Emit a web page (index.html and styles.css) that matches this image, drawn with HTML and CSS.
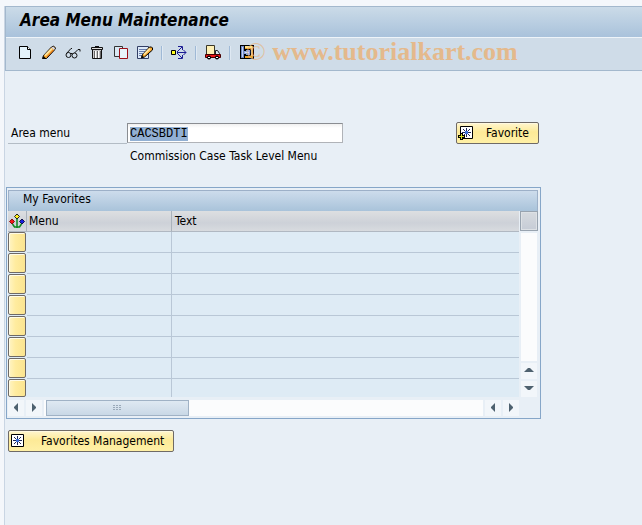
FILE: index.html
```html
<!DOCTYPE html>
<html lang="en">
<head>
  <meta charset="UTF-8">
  <meta name="viewport" content="width=device-width, initial-scale=1.0">
  <title>Area Menu Maintenance</title>
  <link rel="stylesheet" href="styles.css">
  <script>
    window.onload = () => {
      // focus the area menu field with its value selected
      const areaMenu = document.querySelector('#area-menu')
      areaMenu.focus()
      areaMenu.select()
    }
  </script>
</head>
<body>
  <div class="window">
    <header class="header">
      <h1 class="title">Area Menu Maintenance</h1>
      <nav class="toolbar" aria-label="Toolbar">
        <button type="button" class="tool" aria-label="Create">
          <svg viewBox="0 0 16 16"><path d="M2.500 1.500h8l3 3v9h-11z" fill="#e4f3fb" stroke="#000"/><path d="M10.500 1.500v3h3" fill="#fff" stroke="#000"/></svg>
        </button>
        <button type="button" class="tool" aria-label="Change">
          <svg viewBox="0 0 16 16"><path d="M1.500 13.500l1-3 8-8.500 2-1 2 2-1 2-8 8.500z" fill="#f7a62b" stroke="#000"/><path d="M4 10.500l7-7" stroke="#ffe29a" stroke-width="2"/><path d="M6 12l6.500-7" stroke="#d96b18"/><path d="M10.500 2.500l1.500-1 2 2-1 1.500z" fill="#cfd5ef"/><path d="M1.500 14l1-3 2 2z"/></svg>
        </button>
        <button type="button" class="tool" aria-label="Display">
          <svg viewBox="0 0 16 16"><g fill="none" stroke="#111"><path d="M1.500 8.500L6 3.500h1M9.500 8L13 4.500h2v2"/><circle cx="3.500" cy="10" r="2.500"/><circle cx="9.500" cy="10.500" r="2.500"/><path d="M5.500 8.500h2"/></g></svg>
        </button>
        <button type="button" class="tool" aria-label="Delete">
          <svg viewBox="0 0 16 16"><path d="M3.500 4.500h9v9h-9z" fill="#c9c9cb" stroke="#111"/><path d="M2.500 2.500h11v2h-11z" fill="#ddd" stroke="#111"/><path d="M6 1.500h4" stroke="#111"/><path d="M5.500 6v7M8.500 6v7M11.500 6v7" stroke="#666"/><path d="M6.500 6v7M9.500 6v7" stroke="#fff"/></svg>
        </button>
        <button type="button" class="tool" aria-label="Copy">
          <svg viewBox="0 0 16 16"><path d="M1.500 1.500h8v10h-8z" fill="#d9e9f4" stroke="#333"/><path d="M6.500 3.500h8v10h-8z" fill="#e8f4fb" stroke="#9c1019"/></svg>
        </button>
        <button type="button" class="tool" aria-label="Change header">
          <svg viewBox="0 0 16 16"><path d="M.5 1.500h11v12H.5z" fill="#dce9f8" stroke="#333f66"/><path d="M2 4.500h8M2 6.500h7M2 8.500h5M2 10.500h4" stroke="#6b7fae"/><path d="M4.500 12.500l1-3 7-7.500h2l1 1v2l-8 7z" fill="#f7a62b" stroke="#000"/><path d="M7 9.500l6-6" stroke="#ffe29a" stroke-width="2"/><path d="M4 13.500l1-3 2 2z"/></svg>
        </button>
        <span class="separator"></span>
        <button type="button" class="tool" aria-label="Where used">
          <svg viewBox="0 0 16 16"><path d="M6 7.500h9M6 7l5-5M6 8l5 5M7 1.500h4.500V5M7 13.500h4.500V10M12.500 5L15 7.500 12.500 10" fill="none" stroke="#1c1c94"/><path d="M.5 5.500h4v4h-4z" fill="#ffff20" stroke="#000"/></svg>
        </button>
        <span class="separator"></span>
        <button type="button" class="tool" aria-label="Transport">
          <svg viewBox="0 0 16 16"><path d="M1.500.5h8v9h-8z" fill="#fff0b4" stroke="#3a3728"/><path d="M10.500 5.500h2l2 3v2h-4z" fill="#dcecf5" stroke="#222"/><path d="M.5 9.500h15v3H.5z" fill="#ee1616" stroke="#400"/><circle cx="4" cy="12.500" r="2"/><circle cx="12" cy="12.500" r="2"/><path d="M3 12h2v1H3zM11 12h2v1h-2z" fill="#fff"/></svg>
        </button>
        <span class="separator"></span>
        <button type="button" class="tool" aria-label="Enhance">
          <svg viewBox="0 0 16 16"><path d="M1 0h14v14H1z"/><path d="M6 1h8v12H6v-2h5l1-1V5l-1-1H6z" fill="#e9a02c"/><path d="M6 1h7v2H6z" fill="#ffe28a"/><path d="M12 3h1v8h-1z" fill="#f8c860"/><path d="M2 1h3v12H2z" fill="#6f88c8"/><path d="M3 2h1v10H3z" fill="#c3d2f4"/><path d="M5 6h2V5h4v5H7V9H5z" fill="#8fa3dc"/><path d="M6 7h4v1H6z" fill="#dce5fb"/></svg>
        </button>
      </nav>
      <div class="watermark"><span class="copyright">©</span> www.tutorialkart.com</div>
    </header>

    <main class="content">
      <div class="form">
        <div class="field">
          <label for="area-menu">Area menu</label>
          <input type="text" id="area-menu" value="CACSBDTI">
          <output class="description" for="area-menu">Commission Case Task Level Menu</output>
        </div>
        <button type="button" class="button favorite">
          <svg viewBox="0 0 16 16"><path d="M2.500 1.500h12v12h-12z" fill="#fff" stroke="#000"/><path d="M8.500 3v9M4 7.500h9M5 4l7 7M12 4l-7 7" stroke="#1e2858"/><path d="M7 6h3v3H7z" fill="#3b6ed8"/><path d="M2 8h3v2h2v3H5v2H2v-2H0v-3h2z"/><path d="M3 9h1v2h2v1H4v2H3v-2H1v-1h2z" fill="#d9e021"/></svg>
          Favorite
        </button>
      </div>

      <section class="favorites" aria-labelledby="favorites-title">
        <h2 class="favorites-title" id="favorites-title">My Favorites</h2>
        <div class="grid">
          <div class="table">
            <table>
              <colgroup><col class="col-select"><col class="col-menu"><col></colgroup>
              <thead>
                <tr>
                  <th aria-label="Configuration"><svg viewBox="0 0 16 16"><path d="M8 6v9M3.500 11l2 3h5l2-3" fill="none" stroke="#0a8a1e" stroke-width="1.500"/><path d="M8 1L10.500 3.500 8 6 5.500 3.500z" fill="#fff020" stroke="#222"/><path d="M3 6L5.500 8.500 3 11 .5 8.500z" fill="#f01818" stroke="#811"/><path d="M13 6l2.500 2.500L13 11l-2.500-2.500z" fill="#1820e0" stroke="#114"/></svg></th>
                  <th>Menu</th>
                  <th>Text</th>
                </tr>
              </thead>
              <tbody>
                <tr><td><button type="button" class="select" aria-label="Row 1"></button></td><td></td><td></td></tr>
                <tr><td><button type="button" class="select" aria-label="Row 2"></button></td><td></td><td></td></tr>
                <tr><td><button type="button" class="select" aria-label="Row 3"></button></td><td></td><td></td></tr>
                <tr><td><button type="button" class="select" aria-label="Row 4"></button></td><td></td><td></td></tr>
                <tr><td><button type="button" class="select" aria-label="Row 5"></button></td><td></td><td></td></tr>
                <tr><td><button type="button" class="select" aria-label="Row 6"></button></td><td></td><td></td></tr>
                <tr><td><button type="button" class="select" aria-label="Row 7"></button></td><td></td><td></td></tr>
                <tr class="last"><td><button type="button" class="select" aria-label="Row 8"></button></td><td></td><td></td></tr>
              </tbody>
            </table>
          </div>
          <div class="scroll-y">
            <button type="button" class="corner" aria-label="Table settings"></button>
            <div class="track"></div>
            <button type="button" class="arrow" aria-label="Scroll up"><svg viewBox="0 0 16 16"><path d="M3 9l4-4h2l4 4z"/></svg></button>
            <button type="button" class="arrow" aria-label="Scroll down"><svg viewBox="0 0 16 16"><path d="M3 5l4 4h2l4-4z"/></svg></button>
          </div>
          <div class="scroll-x">
            <button type="button" class="arrow" aria-label="Column left"><svg viewBox="0 0 16 16"><path d="M10 3L6 7v1l4 4z"/></svg></button>
            <button type="button" class="arrow" aria-label="Column right"><svg viewBox="0 0 16 16"><path d="M6 3l4 4v1l-4 4z"/></svg></button>
            <div class="track">
              <div class="thumb"><svg viewBox="0 0 9 6"><path d="M0 0h2v1H0zM3 0h2v1H3zM6 0h2v1H6zM0 2h2v1H0zM3 2h2v1H3zM6 2h2v1H6zM0 4h2v1H0zM3 4h2v1H3zM6 4h2v1H6z"/></svg></div>
            </div>
            <button type="button" class="arrow" aria-label="Scroll left"><svg viewBox="0 0 16 16"><path d="M10 3L6 7v1l4 4z"/></svg></button>
            <button type="button" class="arrow" aria-label="Scroll right"><svg viewBox="0 0 16 16"><path d="M6 3l4 4v1l-4 4z"/></svg></button>
          </div>
        </div>
      </section>

      <button type="button" class="button management">
        <svg viewBox="0 0 16 16"><path d="M1.500 1.500h12v12h-12z" fill="#fff" stroke="#000"/><path d="M7.500 3v9M3 7.500h9M4 4l7 7M11 4l-7 7" stroke="#1e2858"/><path d="M6 6h3v3H6z" fill="#3b6ed8"/></svg>
        Favorites Management
      </button>
    </main>
  </div>
</body>
</html>
```
FILE: styles.css
```css
* {
  box-sizing: border-box;
}
body {
  margin: 0;
  padding: 6px 0 0 4px;
  min-height: 100vh;
  display: flex;
  background: #f4f7fb;
  color: #000;
  font-family: "DejaVu Sans Condensed", "DejaVu Sans", sans-serif;
  font-size: 12px;
}
button, input {
  font: inherit;
  color: inherit;
}
button {
  padding: 0;
  border: 0;
  background: none;
}
svg {
  display: block;
  flex: none;
  width: 16px;
  height: 16px;
}
.window {
  flex: 1;
  min-width: 0;
  border-left: 1px solid #c9d5e3;
  background: #e8eff6;
}

/* header */
.header {
  position: relative;
  border: solid #a3b8cd;
  border-width: 1px 0 1px 1px;
}
.title {
  margin: 0;
  padding-left: 14px;
  height: 30px;
  line-height: 26px;
  font-size: 17px;
  font-style: italic;
  background: linear-gradient(#cbdbe8, #a9c2db);
}
.toolbar {
  display: flex;
  align-items: center;
  gap: 8px;
  height: 33px;
  padding: 0 11px 2px;
  border-top: 1px solid #eef4f9;
  background: #cfdce8;
}
.separator {
  width: 2px;
  height: 14px;
  border-left: 1px solid #9fb9d6;
  background: #dfe9f3;
}
.watermark {
  position: absolute;
  left: 240px;
  bottom: 4px;
  line-height: 28px;
  color: #e4b98c;
  font-family: "Liberation Serif", serif;
  font-size: 26px;
  font-weight: bold;
  white-space: nowrap;
  pointer-events: none;
}
.copyright {
  font-weight: normal;
  opacity: 0.8;
}

/* content */
.content {
  padding: 51px 101px 20px 1px;
}
.form {
  display: flex;
  justify-content: space-between;
  align-items: flex-start;
  padding: 0 2px;
}
.field {
  display: grid;
  grid-template-columns: 119px 216px;
  row-gap: 4px;
}
.field label {
  padding-left: 3px;
  padding-top: 1px;
  line-height: 20px;
  border-bottom: 1px solid #b3bcc5;
}
.field input {
  height: 20px;
  margin-top: 1px;
  padding: 1px 2px 0;
  border: 1px solid #b0b3b8;
  border-top-color: #8a8d92;
  border-left-color: #8a8d92;
  outline: 0;
  background: linear-gradient(#f0f0f0, #fff 4px);
  font-family: "Liberation Mono", monospace;
  font-size: 12px;
}
.field input::selection {
  color: #000;
  background: #92b0d3;
}
.description {
  grid-column: 2;
  padding-left: 3px;
  line-height: 16px;
}
.button {
  display: flex;
  align-items: center;
  height: 22px;
  padding: 0 9px 0 1px;
  border: 1px solid #6f6a66;
  border-radius: 2px;
  background: linear-gradient(#fff6cf, #fdea97 45%, #fff0a6);
  box-shadow: inset 0 1px #fff9e0;
}
.favorite {
  gap: 12px;
}
.management {
  gap: 15px;
  margin: 11px 0 0 2px;
}

/* favorites */
.favorites {
  margin-top: 23px;
  padding: 2px 1px;
  border: 1px solid #86a6c8;
}
.favorites-title {
  margin: 0 1px 0 0;
  height: 21px;
  padding-left: 14px;
  line-height: 17px;
  font-size: 12px;
  font-weight: normal;
  border: solid #9db0c8;
  border-width: 1px 1px 0 1px;
  background: linear-gradient(#cddcec, #a9c3da);
}
.grid {
  display: grid;
  grid-template-columns: minmax(0, 1fr) 18px;
  column-gap: 1px;
  row-gap: 3px;
  padding-right: 1px;
}
table {
  width: 100%;
  table-layout: fixed;
  border-collapse: separate;
  border-spacing: 0;
}
.col-select {
  width: 19px;
}
.col-menu {
  width: 145px;
}
th {
  height: 21px;
  padding: 0 2px;
  text-align: left;
  font-weight: normal;
  border-right: 1px solid #a9b2bb;
  border-bottom: 1px solid #b0b8c2;
  background: linear-gradient(#dddfe1, #cdd1d8 60%, #d8dbdf);
}
th:first-child {
  padding: 0 1px;
}
th:last-child {
  padding-left: 3px;
  border-right: 0;
}
td {
  height: 21px;
  padding: 0;
  vertical-align: top;
  border-right: 1px solid #b9c7d6;
  border-bottom: 1px solid #b9c7d6;
  background: #deebf5;
}
td:first-child {
  border: 0;
}
td:last-child {
  border-right: 0;
}
.last td {
  height: 18px;
  border-bottom: 0;
}
.select {
  display: block;
  width: 18px;
  height: 20px;
  border: 1px solid #6f6a66;
  border-radius: 2px;
  background: linear-gradient(90deg, #fff4c4, #ffec9f 40%, #fbe48f);
  box-shadow: inset 1px 1px #fffbe6;
}
.last .select {
  height: 18px;
}

/* scrollbars */
.scroll-y {
  display: flex;
  flex-direction: column;
  align-items: center;
  gap: 2px;
}
.corner {
  width: 18px;
  height: 20px;
  border: 1px solid #98a3af;
  background: linear-gradient(#d6dadf, #c6ccd6);
  box-shadow: inset 0 0 0 1px #dde1e5;
}
.track {
  flex: 1;
  background: #fbfcfd;
}
.scroll-y .track {
  width: 16px;
}
.scroll-x {
  display: flex;
  gap: 2px;
  height: 16px;
}
.arrow {
  width: 16px;
  height: 16px;
  background: #f2f6fa;
}
.arrow path {
  fill: #4e616f;
}
.thumb {
  display: flex;
  align-items: center;
  justify-content: center;
  width: 143px;
  height: 16px;
  margin-left: 2px;
  border: 1px solid #a0b2c5;
  background: linear-gradient(#dfe9f2, #c9d8e6);
}
.thumb svg {
  width: 9px;
  height: 6px;
  fill: #9aa9b8;
}
```
